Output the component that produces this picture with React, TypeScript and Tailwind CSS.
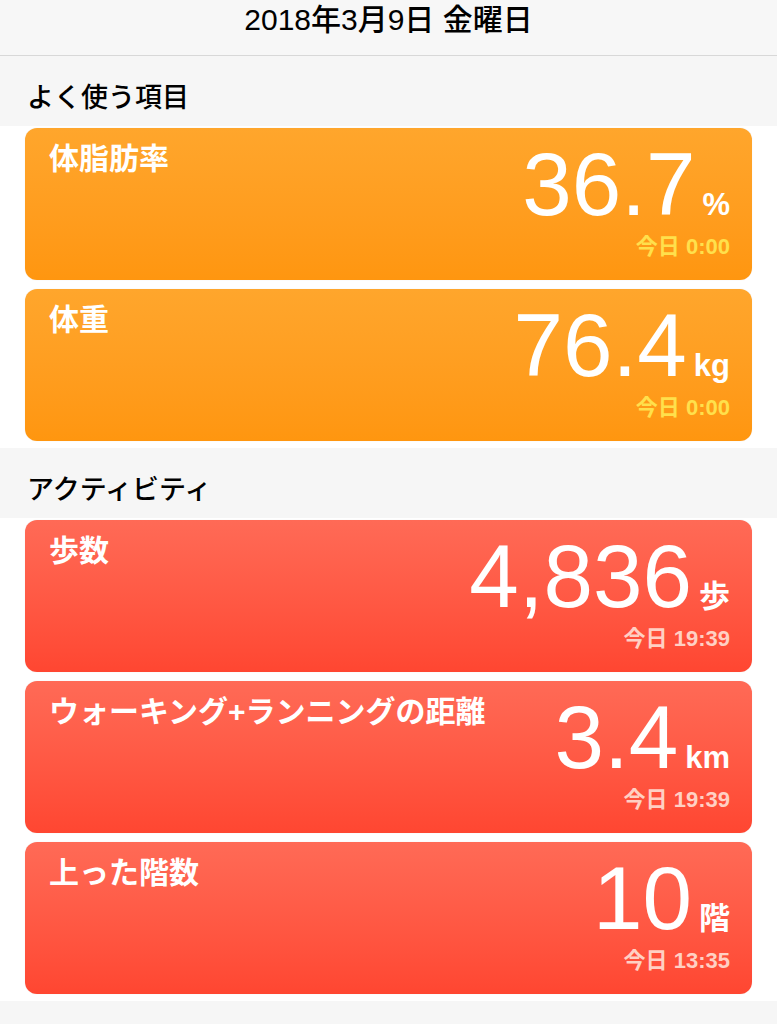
import React from 'react';

type Metric = {
  label: string;
  value: string;
  unit: string;
  time: string;
  tone: 'orange' | 'red';
};

const favorites: Metric[] = [
  { label: '体脂肪率', value: '36.7', unit: '%', time: '今日 0:00', tone: 'orange' },
  { label: '体重', value: '76.4', unit: 'kg', time: '今日 0:00', tone: 'orange' },
];

const activity: Metric[] = [
  { label: '歩数', value: '4,836', unit: '歩', time: '今日 19:39', tone: 'red' },
  { label: 'ウォーキング+ランニングの距離', value: '3.4', unit: 'km', time: '今日 19:39', tone: 'red' },
  { label: '上った階数', value: '10', unit: '階', time: '今日 13:35', tone: 'red' },
];

const font = "font-['Liberation_Sans','Noto_Sans_CJK_JP',sans-serif]";

function MetricCard({ m }: { m: Metric }) {
  const bg =
    m.tone === 'orange'
      ? 'bg-gradient-to-b from-[#ffa62c] to-[#ff960f]'
      : 'bg-gradient-to-b from-[#ff6a56] to-[#ff4631]';
  const timeColor = m.tone === 'orange' ? 'text-[#ffe04c]' : 'text-[#ffd0c4]';

  return (
    <div className={`h-[152px] rounded-[12px] ${bg} flex justify-between pl-6 pr-[22px] shadow-[0_0_1px_rgba(0,0,0,0.15)]`}>
      <div className="pt-[16px] text-white text-[30px] leading-none font-semibold">
        {m.label}
      </div>
      <div className="flex flex-col items-end pt-3">
        <div className="flex items-baseline text-white leading-none">
          <span className="text-[89px] leading-none">{m.value}</span>
          <span className="ml-[7px] text-[31px] font-bold leading-none">{m.unit}</span>
        </div>
        <div className={`mt-[7px] text-[22px] leading-none font-semibold ${timeColor}`}>{m.time}</div>
      </div>
    </div>
  );
}

function Section({ title, items }: { title: string; items: Metric[] }) {
  return (
    <section>
      <div className="h-[70px] bg-[#f6f6f6] flex items-end pb-[14px] px-[27px]">
        <h2 className="text-[27px] leading-none font-medium text-black">{title}</h2>
      </div>
      <div className="bg-white px-[25px] pt-[2px] pb-[7px] flex flex-col gap-[9px]">
        {items.map((m) => (
          <MetricCard key={m.label} m={m} />
        ))}
      </div>
    </section>
  );
}

export default function App() {
  return (
    <div className={`w-[777px] h-[1024px] overflow-hidden bg-[#f6f6f6] ${font}`}>
      <header className="h-[56px] bg-[#f7f7f7] border-b border-[#d8d8d8] flex items-start justify-center pt-[4px]">
        <h1 className="text-[30px] leading-[32px] font-medium text-black">2018年3月9日 金曜日</h1>
      </header>
      <Section title="よく使う項目" items={favorites} />
      <Section title="アクティビティ" items={activity} />
    </div>
  );
}
